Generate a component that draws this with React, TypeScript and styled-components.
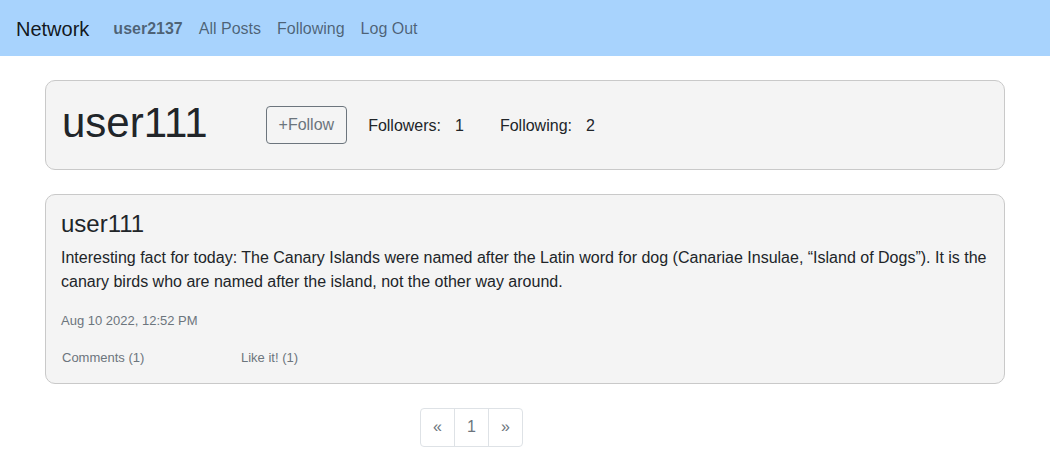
import React from 'react';
import styled, { createGlobalStyle } from 'styled-components';

const GlobalStyle = createGlobalStyle`
  * { box-sizing: border-box; }
  body {
    margin: 0;
    font-family: "Liberation Sans", Arial, sans-serif;
    color: #212529;
    background: #fff;
  }
`;

const NavBar = styled.nav`
  display: flex;
  align-items: center;
  height: 56px;
  padding: 2px 16px 0;
  background: #a8d3fd;
`;

const Brand = styled.a`
  font-size: 20px;
  color: rgba(0, 0, 0, 0.9);
  margin-right: 16px;
  text-decoration: none;
`;

const NavLink = styled.a<{ $bold?: boolean }>`
  font-size: 16px;
  padding: 0 8px;
  color: rgba(0, 0, 0, 0.55);
  font-weight: ${(p) => (p.$bold ? 700 : 400)};
  text-decoration: none;
`;

const Container = styled.main`
  width: 960px;
  margin: 24px auto 0;
`;

const Card = styled.section`
  background: #f4f4f4;
  border: 1px solid #c9c9c9;
  border-radius: 10px;
`;

const ProfileCard = styled(Card)`
  display: flex;
  align-items: center;
  height: 90px;
  padding: 0 16px;
`;

const ProfileName = styled.h1`
  font-size: 42px;
  font-weight: 400;
  margin: 0 58px 4px 0;
  line-height: 1.2;
`;

const FollowButton = styled.button`
  height: 38px;
  padding: 0 12px;
  font-family: inherit;
  font-size: 16px;
  color: #6c757d;
  background: transparent;
  border: 1px solid #6c757d;
  border-radius: 4px;
  margin-right: 21px;
`;

const Stat = styled.div`
  font-size: 16px;
  margin-right: 36px;
  display: flex;
  gap: 14px;
  padding-top: 2px;
`;

const PostCard = styled(Card)`
  margin-top: 24px;
  padding: 15px 15px 15px;
`;

const PostAuthor = styled.h4`
  font-size: 24px;
  font-weight: 400;
  line-height: 1.2;
  margin: 0;
`;

const PostBody = styled.p`
  font-size: 16px;
  line-height: 24px;
  margin: 7px 0 0;
`;

const PostDate = styled.div`
  font-size: 13px;
  line-height: 20px;
  color: #6c757d;
  margin-top: 17px;
`;

const ActionRow = styled.div`
  display: flex;
  margin-top: 17px;
  padding-left: 1px;
`;

const Action = styled.a`
  font-size: 13px;
  line-height: 20px;
  color: #6c757d;
  width: 179px;
`;

const Pagination = styled.ul`
  display: flex;
  list-style: none;
  padding: 0;
  margin: 24px 0 0 375px;
`;

const PageItem = styled.li`
  width: 35px;
  height: 39px;
  display: flex;
  align-items: center;
  justify-content: center;
  font-size: 16px;
  color: #6c757d;
  border: 1px solid #dee2e6;
  margin-left: -1px;
  &:first-child {
    margin-left: 0;
    border-radius: 4px 0 0 4px;
  }
  &:last-child {
    border-radius: 0 4px 4px 0;
  }
`;

const App: React.FC = () => (
  <>
    <GlobalStyle />
    <NavBar>
      <Brand>Network</Brand>
      <NavLink $bold>user2137</NavLink>
      <NavLink>All Posts</NavLink>
      <NavLink>Following</NavLink>
      <NavLink>Log Out</NavLink>
    </NavBar>
    <Container>
      <ProfileCard>
        <ProfileName>user111</ProfileName>
        <FollowButton>+Follow</FollowButton>
        <Stat>
          <span>Followers:</span>
          <span>1</span>
        </Stat>
        <Stat>
          <span>Following:</span>
          <span>2</span>
        </Stat>
      </ProfileCard>
      <PostCard>
        <PostAuthor>user111</PostAuthor>
        <PostBody>
          Interesting fact for today: The Canary Islands were named after the Latin word for dog
          (Canariae Insulae, “Island of Dogs”). It is the canary birds who are named after the
          island, not the other way around.
        </PostBody>
        <PostDate>Aug 10 2022, 12:52 PM</PostDate>
        <ActionRow>
          <Action>Comments (1)</Action>
          <Action>Like it! (1)</Action>
        </ActionRow>
      </PostCard>
      <Pagination>
        <PageItem>«</PageItem>
        <PageItem>1</PageItem>
        <PageItem>»</PageItem>
      </Pagination>
    </Container>
  </>
);

export default App;
